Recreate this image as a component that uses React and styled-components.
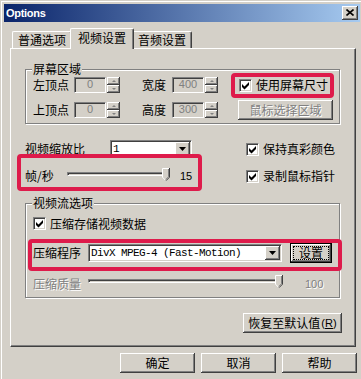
import React from "react";
import styled, { createGlobalStyle, css } from "styled-components";

const FACE = "#D4D0C8";
const SHADOW = "#808080";
const DARK = "#404040";
const HI = "#FFFFFF";
const RED = "#DE1B4B";

const raised = css`
  background: ${FACE};
  box-shadow: inset -1px -1px 0 ${DARK}, inset 1px 1px 0 ${HI},
    inset -2px -2px 0 ${SHADOW};
`;

const sunken = css`
  border: 1px solid;
  border-color: ${SHADOW} ${HI} ${HI} ${SHADOW};
  box-shadow: inset 1px 1px 0 ${DARK}, inset -1px -1px 0 ${FACE};
`;

const embossed = css`
  color: ${SHADOW};
  text-shadow: 1px 1px 0 ${HI};
`;

const GlobalStyle = createGlobalStyle`
  html, body { margin: 0; padding: 0; }
  body {
    background: #fff;
    font-family: "Noto Sans CJK SC", "Liberation Sans", sans-serif;
    font-size: 12px;
    color: #000;
  }
  *, *::before, *::after { box-sizing: border-box; }
`;

const Window = styled.div`
  position: relative;
  width: 361px;
  height: 379px;
  padding: 4px 1px 0 4px;
  background: ${FACE};
  box-shadow: inset 1px 1px 0 ${FACE}, inset 2px 2px 0 ${HI};
  display: flex;
  flex-direction: column;
  overflow: hidden;
`;

const TitleBar = styled.div`
  height: 18px;
  flex: none;
  display: flex;
  align-items: center;
  justify-content: space-between;
  padding: 0 2px;
  background: linear-gradient(to right, #0a246a, #a6caf0);
`;

const Title = styled.span`
  font: bold 11px "Liberation Sans", sans-serif;
  letter-spacing: -0.3px;
  color: #fff;
`;

const CaptionButton = styled.div`
  width: 16px;
  height: 14px;
  ${raised};
  display: flex;
  align-items: center;
  justify-content: center;
  padding-bottom: 1px;
`;

const Body = styled.div`
  display: flex;
  flex-direction: column;
  padding: 6px 4px 0 6px;
`;

const Tabs = styled.div`
  display: flex;
  align-items: flex-end;
  height: 20px;
  padding-left: 2px;
  position: relative;
  z-index: 1;
`;

const Tab = styled.div`
  width: 60px;
  height: 17px;
  display: flex;
  align-items: center;
  justify-content: center;
  padding-bottom: 1px;
  background: ${FACE};
  border-top: 1px solid ${HI};
  border-left: 1px solid ${HI};
  border-right: 1px solid ${DARK};
  box-shadow: inset -1px 0 0 ${SHADOW};
  border-radius: 2px 2px 0 0;
  line-height: 14px;
  white-space: nowrap;
  ${(p) =>
    p.$active &&
    css`
      width: 64px;
      height: 21px;
      margin: 0 -2px -1px;
      position: relative;
      z-index: 2;
      padding-bottom: 3px;
    `}
`;

const Panel = styled.div`
  height: 299px;
  border: 1px solid;
  border-color: ${HI} ${DARK} ${DARK} ${HI};
  box-shadow: inset -1px -1px 0 ${SHADOW};
  padding: 20px 15px 0 14px;
  display: flex;
  flex-direction: column;
`;

const Group = styled.div`
  display: flex;
  flex-direction: column;
  margin-top: ${(p) => p.$mt || 0}px;
  padding: ${(p) => p.$pad};
  border: 1px solid ${SHADOW};
  box-shadow: inset 1px 1px 0 ${HI}, 1px 1px 0 ${HI};
`;

const Legend = styled.div`
  align-self: flex-start;
  margin: -8px 0 0 -1px;
  padding: 0 1px;
  height: 14px;
  line-height: 14px;
  background: ${FACE};
  white-space: nowrap;
`;

const ScreenGrid = styled.div`
  display: grid;
  grid-template-columns: 41px 68px 30px 66px 95px;
  grid-template-rows: 16px 20px;
  row-gap: 7px;
  align-items: center;
  justify-items: start;
  margin-top: 1px;
`;

const MidGrid = styled.div`
  display: grid;
  grid-template-columns: 221px 1fr;
  grid-template-rows: 20px 16px;
  row-gap: 9px;
  align-items: center;
  margin-top: 15px;
`;

const Field = styled.div`
  display: flex;
  align-items: center;
`;

const Row = styled.div`
  display: flex;
  align-items: center;
  height: ${(p) => p.$h}px;
  margin-top: ${(p) => p.$mt}px;
`;

const Label = styled.span`
  flex: none;
  width: ${(p) => (p.$w ? `${p.$w}px` : "auto")};
  line-height: 14px;
  white-space: nowrap;
  ${(p) => p.$disabled && embossed};
`;

const Value = styled.span`
  flex: none;
  margin-left: ${(p) => p.$ml || 0}px;
  font: 11px "Liberation Sans", sans-serif;
  line-height: 14px;
  ${(p) => p.$disabled && embossed};
`;

/* spin box */
const Spin = styled.div`
  display: flex;
  width: 46px;
  height: 16px;
`;

const SpinEdit = styled.div`
  width: 32px;
  height: 16px;
  margin-right: 1px;
  ${sunken};
  background: ${FACE};
  color: ${SHADOW};
  font: 11px "Liberation Sans", sans-serif;
  line-height: 13px;
  text-align: center;
`;

const SpinButtons = styled.div`
  width: 13px;
  display: flex;
  flex-direction: column;
`;

const SpinButton = styled.div`
  flex: 1;
  ${raised};
  display: flex;
  align-items: center;
  justify-content: center;
  &::after {
    content: "";
    border-left: 2px solid transparent;
    border-right: 2px solid transparent;
    ${(p) =>
      p.$down
        ? css`border-top: 2px solid ${SHADOW};`
        : css`border-bottom: 2px solid ${SHADOW};`}
  }
`;

function SpinBox({ value }) {
  return (
    <Spin>
      <SpinEdit>{value}</SpinEdit>
      <SpinButtons>
        <SpinButton />
        <SpinButton $down />
      </SpinButtons>
    </Spin>
  );
}

/* checkbox */
const CheckRow = styled.label`
  display: flex;
  align-items: center;
  gap: 4px;
  line-height: 14px;
  white-space: nowrap;
  padding-left: ${(p) => p.$pl || 0}px;
`;

const Box = styled.span`
  flex: none;
  width: 13px;
  height: 13px;
  background: #fff;
  ${sunken};
  display: flex;
`;

function Checkbox({ label, pl }) {
  return (
    <CheckRow $pl={pl}>
      <Box>
        <svg width="11" height="11" viewBox="0 0 11 11">
          <path d="M2 4L4.5 6.5L9 2V5L4.5 9.5L2 7Z" fill="#000" />
        </svg>
      </Box>
      {label}
    </CheckRow>
  );
}

/* combo */
const Combo = styled.div`
  flex: none;
  width: ${(p) => p.$w}px;
  height: 18px;
  ${sunken};
  background: #fff;
  display: flex;
  align-items: stretch;
  padding: 1px;
`;

const ComboText = styled.span`
  flex: 1;
  padding-left: 1px;
  font: 11px "Liberation Mono", monospace;
  letter-spacing: -0.6px;
  line-height: 14px;
  white-space: pre;
  overflow: hidden;
`;

const DropButton = styled.div`
  width: 15px;
  ${raised};
  display: flex;
  align-items: center;
  justify-content: center;
`;

function ComboBox({ w, text }) {
  return (
    <Combo $w={w}>
      <ComboText>{text}</ComboText>
      <DropButton>
        <svg width="7" height="4" viewBox="0 0 7 4">
          <path d="M0 0H7L3.5 4Z" fill="#000" />
        </svg>
      </DropButton>
    </Combo>
  );
}

/* slider */
const Slider = styled.div`
  position: relative;
  flex: none;
  width: ${(p) => p.$w}px;
  height: 16px;
  padding-top: ${(p) => p.$pt ?? 4}px;
`;

const Track = styled.div`
  height: 4px;
  border: 1px solid;
  border-color: ${SHADOW} ${HI} ${HI} ${SHADOW};
  box-shadow: inset 1px 1px 0 ${DARK};
`;

const Thumb = styled.svg`
  position: absolute;
  right: 0;
  top: ${(p) => p.$top ?? 0}px;
`;

function TrackBar({ w, pt, top }) {
  return (
    <Slider $w={w} $pt={pt}>
      <Track />
      <Thumb $top={top} width="8" height="13" viewBox="0 0 8 13">
        <path d="M0 0H8V9L4 13L0 9Z" fill={FACE} />
        <path d="M0.5 9.2V0.5H7.5" fill="none" stroke={HI} />
        <path d="M0.5 9.2L3.8 12.5" fill="none" stroke={HI} />
        <path d="M7.5 0V9.2L4 12.7" fill="none" stroke={DARK} />
        <path d="M6.5 1V8.8L3.8 11.5" fill="none" stroke={SHADOW} />
      </Thumb>
    </Slider>
  );
}

/* buttons */
const Button = styled.div`
  flex: none;
  width: ${(p) => p.$w}px;
  height: ${(p) => p.$h || 20}px;
  margin-left: ${(p) => p.$ml || 0}px;
  ${raised};
  display: flex;
  align-items: center;
  justify-content: center;
  line-height: 14px;
  white-space: nowrap;
  ${(p) => p.$disabled && embossed};
  ${(p) =>
    p.$default &&
    css`
      padding: 3px;
      align-items: stretch;
      box-shadow: inset 0 0 0 1px #000, inset -2px -2px 0 ${DARK},
        inset 2px 2px 0 ${HI}, inset -3px -3px 0 ${SHADOW};
    `}
`;

const FocusRect = styled.span`
  flex: 1;
  border: 1px dotted #000;
  display: flex;
  align-items: center;
  justify-content: center;
`;

const Accel = styled.span`
  font: 11px "Liberation Sans", sans-serif;
  margin-left: 1px;
`;

const ResetRow = styled.div`
  display: flex;
  justify-content: flex-end;
  margin: 15px -2px 0 0;
`;

const DialogButtons = styled.div`
  display: flex;
  justify-content: flex-end;
  gap: 6px;
  margin: 6px -1px 0 0;
`;

const Highlight = styled.div`
  position: absolute;
  left: ${(p) => p.$x}px;
  top: ${(p) => p.$y}px;
  width: ${(p) => p.$w}px;
  height: ${(p) => p.$h}px;
  border: 4px solid ${RED};
  border-radius: 4px;
  pointer-events: none;
  z-index: 5;
`;

export default function App() {
  return (
    <>
      <GlobalStyle />
      <Window>
        <TitleBar>
          <Title>Options</Title>
          <CaptionButton>
            <svg width="8" height="7" viewBox="0 0 8 7">
              <path
                d="M0.5 0.5L7.5 6.5M7.5 0.5L0.5 6.5"
                stroke="#000"
                strokeWidth="1.6"
              />
            </svg>
          </CaptionButton>
        </TitleBar>
        <Body>
          <Tabs>
            <Tab>普通选项</Tab>
            <Tab $active>视频设置</Tab>
            <Tab>音频设置</Tab>
          </Tabs>
          <Panel>
            <Group $pad="0 6px 3px 7px">
              <Legend>屏幕区域</Legend>
              <ScreenGrid>
                <Label>左顶点</Label>
                <SpinBox value="0" />
                <Label>宽度</Label>
                <SpinBox value="400" />
                <Checkbox label="使用屏幕尺寸" pl={1} />
                <Label>上顶点</Label>
                <SpinBox value="0" />
                <Label>高度</Label>
                <SpinBox value="300" />
                <Button $w={95} $disabled>
                  鼠标选择区域
                </Button>
              </ScreenGrid>
            </Group>
            <MidGrid>
              <Field>
                <Label $w={85}>视频缩放比</Label>
                <ComboBox w={82} text="1" />
              </Field>
              <Checkbox label="保持真彩颜色" />
              <Field>
                <Label $w={42}>帧/秒</Label>
                <TrackBar w={103} />
                <Value $ml={10}>15</Value>
              </Field>
              <Checkbox label="录制鼠标指针" />
            </MidGrid>
            <Group $mt={19} $pad="0 6px 6px 7px">
              <Legend>视频流选项</Legend>
              <Row $mt={6} $h={15}>
                <Checkbox label="压缩存储视频数据" />
              </Row>
              <Row $mt={12} $h={20}>
                <Label $w={55}>压缩程序</Label>
                <ComboBox w={194} text="DivX MPEG-4 (Fast-Motion)" />
                <Button $w={42} $ml={8} $default>
                  <FocusRect>设置</FocusRect>
                </Button>
              </Row>
              <Row $mt={13} $h={15}>
                <Label $w={55} $disabled>
                  压缩质量
                </Label>
                <TrackBar w={195} pt={3} top={-1} />
                <Value $ml={22} $disabled>
                  100
                </Value>
              </Row>
            </Group>
            <ResetRow>
              <Button $w={99}>
                恢复至默认值
                <Accel>
                  (<u>R</u>)
                </Accel>
              </Button>
            </ResetRow>
          </Panel>
          <DialogButtons>
            <Button $w={75}>确定</Button>
            <Button $w={75}>取消</Button>
            <Button $w={75}>帮助</Button>
          </DialogButtons>
        </Body>
        <Highlight $x={231} $y={73} $w={103} $h={25} />
        <Highlight $x={17} $y={154} $w={185} $h={37} />
        <Highlight $x={28} $y={239} $w={314} $h={32} />
      </Window>
    </>
  );
}
